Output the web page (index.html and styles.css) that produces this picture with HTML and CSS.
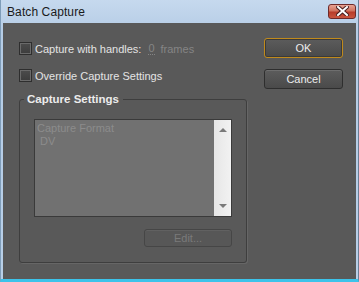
FILE: index.html
```html
<!DOCTYPE html>
<html lang="en">

<head>
    <meta charset="UTF-8">
    <title>Batch Capture</title>
    <link rel="stylesheet" href="styles.css">
</head>

<body>
    <div class="window">
        <div class="titlebar">
            <span class="title">Batch Capture</span>
            <button class="close-btn" aria-label="Close">
                <svg width="13" height="10" viewBox="0 0 13 10">
                    <path d="M2 1 L11 9 M11 1 L2 9" stroke="#4a2020" stroke-width="4" stroke-linecap="square"/>
                    <path d="M2 1 L11 9 M11 1 L2 9" stroke="#ffffff" stroke-width="2" stroke-linecap="square"/>
                </svg>
            </button>
        </div>

        <div class="client">
            <div class="main-col">
                <label class="check-row">
                    <span class="checkbox"></span>
                    <span>Capture with handles:</span>
                    <span class="muted num">0</span>
                    <span class="muted">frames</span>
                </label>
                <label class="check-row second">
                    <span class="checkbox"></span>
                    <span>Override Capture Settings</span>
                </label>

                <fieldset class="group">
                    <legend>Capture Settings</legend>
                    <div class="listbox">
                        <div class="list-items">
                            <div class="item">Capture Format</div>
                            <div class="item sub">DV</div>
                        </div>
                        <div class="scrollbar">
                            <span class="arrow up"></span>
                            <span class="arrow down"></span>
                        </div>
                    </div>
                    <div class="group-actions">
                        <button class="btn disabled">Edit...</button>
                    </div>
                </fieldset>
            </div>

            <div class="side-col">
                <button class="btn default">OK</button>
                <button class="btn">Cancel</button>
            </div>
        </div>
    </div>
</body>

</html>
```

FILE: styles.css
```css
body {
    margin: 0;
    background-color: #b9d1ea;
    font-family: 'Liberation Sans', Arial, sans-serif;
}

.window {
    width: 359px;
    height: 282px;
    box-sizing: border-box;
    border-left: 1px solid #7f9db9;
    border-right: 1px solid #6b7f96;
    border-bottom: 3px solid #3cc3ea;
    background: linear-gradient(#c6d9ee, #b6cde6 30px, #b8cfe8);
    display: flex;
    flex-direction: column;
}

.titlebar {
    height: 23px;
    display: flex;
    align-items: center;
    justify-content: space-between;
    padding: 0 2px 0 6px;
    flex-shrink: 0;
}

.title {
    font-size: 12px;
    color: #1a1a1a;
    letter-spacing: 0.1px;
}

.close-btn {
    width: 28px;
    height: 15px;
    margin-top: -1px;
    padding: 0;
    border: 1px solid #6e2a2a;
    border-radius: 3px;
    background: linear-gradient(#e8a393, #d0735f 45%, #b83c2a 55%, #c9553f);
    display: flex;
    align-items: center;
    justify-content: center;
}

.client {
    flex: 1;
    margin: 0 2px 0 2px;
    background-color: #595959;
    display: flex;
    justify-content: space-between;
    padding: 15px 13px 0 16px;
    font-size: 11px;
    color: #e4e4e4;
}

.main-col {
    width: 228px;
    display: flex;
    flex-direction: column;
}

.check-row {
    display: flex;
    align-items: center;
    height: 13px;
    margin-top: 4px;
}

.check-row.second {
    margin-top: 14px;
}

.checkbox {
    width: 11px;
    height: 11px;
    border: 1px solid #2e2e2e;
    box-shadow: inset 0 0 0 1px #6a6a6a;
    background: linear-gradient(#4c4c4c, #3c3c3c);
    margin-right: 3px;
}

.muted {
    color: #858585;
    margin-left: 6px;
}

.num {
    border-bottom: 1px dotted #858585;
    line-height: 11px;
    margin-left: 7px;
}

.group {
    margin: 11px 0 0 0;
    padding: 0 14px 13px 4px;
    border: 1px solid #3e3e3e;
    border-radius: 3px;
    box-shadow: 1px 1px 0 #666666;
    height: 170px;
    box-sizing: border-box;
}

.group legend {
    font-weight: bold;
    font-size: 11.5px;
    padding: 0 4px 0 3px;
    color: #ececec;
}

.listbox {
    margin: 14px 0 0 10px;
    height: 98px;
    box-sizing: border-box;
    border: 1px solid #3a3a3a;
    background-color: #717171;
    display: flex;
}

.list-items {
    flex: 1;
    padding: 2px 0 0 2px;
    color: #8c8c8c;
    font-size: 11px;
    line-height: 13px;
}

.item.sub {
    padding-left: 3px;
}

.scrollbar {
    width: 17px;
    background: linear-gradient(90deg, #e6e6e6, #f2f2f2);
    display: flex;
    flex-direction: column;
    justify-content: space-between;
    align-items: center;
    padding: 8px 0 8px;
}

.arrow {
    width: 0;
    height: 0;
    border-left: 4px solid transparent;
    border-right: 4px solid transparent;
}

.arrow.up {
    border-bottom: 4px solid #7a7a7a;
}

.arrow.down {
    border-top: 4px solid #7a7a7a;
}

.group-actions {
    display: flex;
    justify-content: flex-end;
    margin-top: 12px;
}

.side-col {
    display: flex;
    flex-direction: column;
    gap: 11px;
}

.btn {
    width: 79px;
    height: 20px;
    border: 1px solid #2e2e2e;
    border-radius: 3px;
    background: linear-gradient(#5c5c5c, #4a4a4a);
    box-shadow: inset 0 1px 0 #6e6e6e;
    color: #ececec;
    font-family: 'Liberation Sans', Arial, sans-serif;
    font-size: 11px;
    padding: 0;
}

.btn.default {
    border-color: #c08a1c;
    box-shadow: inset 0 0 0 1px #3a3a3a;
}

.btn.disabled {
    width: 88px;
    height: 18px;
    color: #7a7a7a;
    border-color: #464646;
    background: #575757;
    box-shadow: inset 0 1px 0 #616161;
}
```
